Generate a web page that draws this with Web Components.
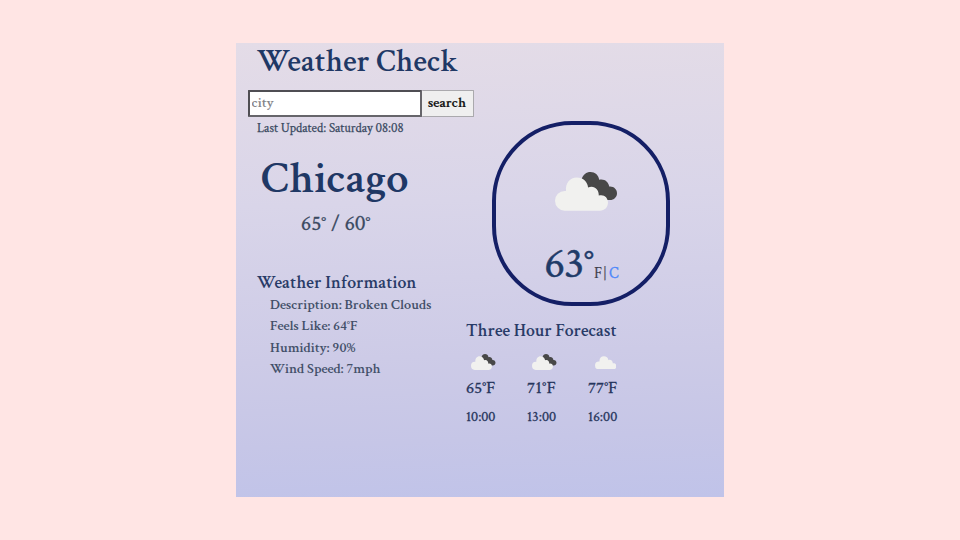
<!DOCTYPE html>
<html lang="en">
<head>
<meta charset="utf-8">
<title>Weather Check</title>
<style>
body{margin:0;width:960px;height:540px;overflow:hidden;background:#ffe5e4;font-family:"Crimson Text","Liberation Serif",serif}
</style>
</head>
<body>
<weather-app></weather-app>
<script>
// One line of text, spaced out to a given measure.
class TextLine extends HTMLElement{
  connectedCallback(){
    const size=this.getAttribute('size'),line=this.getAttribute('line'),stroke=this.getAttribute('stroke')||0,weight=this.getAttribute('weight')||600;
    const root=this.attachShadow({mode:'open'});
    root.innerHTML=`<style>:host{display:block;white-space:nowrap;font-size:${size}px;font-weight:${weight};line-height:${line}px;height:${line}px;-webkit-text-stroke:${stroke}px currentColor}span{display:inline-block}</style><span><slot></slot></span>`;
    const span=root.querySelector('span'),w=+this.getAttribute('measure');
    if(w){const n=this.textContent.length;span.style.letterSpacing=((w-span.getBoundingClientRect().width)/n)+'px';}
  }
}
customElements.define('text-line',TextLine);

class CloudIcon extends HTMLElement{
  connectedCallback(){
    const dark=this.hasAttribute('broken')?'<path fill="#484848" d="M26.5 7.5C28 2.500 31.300 0 35.500 0C40 0 43.500 3 44.200 7.800C49 6.500 53.500 9.500 54.200 14.500C58.500 14 62 17 62 21.200C62 25 59 28 55 28H38Z"/>':'';
    this.attachShadow({mode:'open'}).innerHTML=`<style>:host{display:block}svg{display:block;width:100%;height:100%}</style><svg viewBox="${dark?'0 0 62 39':'0 5 53 34'}" preserveAspectRatio="none">${dark}<path fill="#f1f1ef" d="M9.700 38.700A9.700 9.900 0 0 1 9.700 18.900L11 19C10.300 11 15 5.500 21.700 5.500C28 5.500 32.500 9.500 33.100 15.500C38.800 13 44 17 43.800 23.500C49 22 53 25.500 53 30.500C53 35.300 49.500 38.700 45 38.700Z"/></svg>`;
  }
}
customElements.define('cloud-icon',CloudIcon);

class CitySearch extends HTMLElement{
  connectedCallback(){
    this.attachShadow({mode:'open'}).innerHTML=`<style>
    :host{display:flex;height:27px}
    *{box-sizing:border-box;font-family:inherit}
    input{width:174px;height:27px;margin:0;padding:0 2px 3px;border:2px solid #4f4e53;border-right-color:#66656a;border-bottom-color:#66656a;border-radius:1px;background:#fff;font-size:14.500px;font-weight:600;outline:0}
    input::placeholder{color:#85858a;opacity:1}
    button{width:52px;height:27px;margin:0;padding:0 0 3px;border:1px solid #aaa9ad;border-left:0;border-radius:1px;background:#efefef;color:#111;font-size:14.400px;font-weight:600;-webkit-text-stroke:.2px #111}
    </style><input placeholder="city" aria-label="city"><button>search</button>`;
  }
}
customElements.define('city-search',CitySearch);

class ConditionBadge extends HTMLElement{
  connectedCallback(){
    this.attachShadow({mode:'open'}).innerHTML=`<style>
    :host{display:block;box-sizing:border-box;width:178px;height:185px;border:4px solid #141f66;border-radius:80px;padding:47px 0 0 48px}
    cloud-icon{width:62px;height:39px;margin-left:11px}
    .now{display:flex;align-items:flex-end;margin-top:27px;height:52px;color:#1f3b68}
    .f{color:#43424f}.bar{color:#55535f}.c{color:#4f88fa}.u{display:flex;padding-bottom:6px}
    </style><cloud-icon broken></cloud-icon><div class="now"><text-line size="43.100" line="52" measure="49.500" weight="400" stroke=".5">63°</text-line><div class="u"><text-line class="f" size="15" line="20" measure="9" weight="400" stroke=".2">F</text-line><text-line class="bar" size="15" line="20" measure="6" weight="400" stroke=".2">|</text-line><text-line class="c" size="15" line="20" weight="400" stroke=".3">C</text-line></div></div>`;
  }
}
customElements.define('condition-badge',ConditionBadge);

class ForecastHour extends HTMLElement{
  connectedCallback(){
    const broken=this.hasAttribute('broken');
    this.attachShadow({mode:'open'}).innerHTML=`<style>
    :host{display:block;width:61px;color:#26355c}
    .sky{height:18px;padding-left:${broken?5:6.5}px;padding-top:${broken?0:1.5}px;box-sizing:border-box}
    cloud-icon{width:${broken?24.500:21.500}px;height:${broken?16:13.500}px}
    .t{margin-top:5px}.h{margin-top:9px}
    </style><div class="sky"><cloud-icon ${broken?'broken':''}></cloud-icon></div>
    <text-line class="t" size="17.300" line="22" measure="29.300" weight="400" stroke=".3">${this.getAttribute('temp')}°F</text-line>
    <text-line class="h" size="14" line="18" measure="29.300" weight="400" stroke=".3">${this.getAttribute('hour')}</text-line>`;
  }
}
customElements.define('forecast-hour',ForecastHour);

class WeatherApp extends HTMLElement{
  connectedCallback(){
    this.attachShadow({mode:'open'}).innerHTML=`<style>
    :host{display:flex;justify-content:center;padding-top:43px}
    main{width:488px;height:454px;background:linear-gradient(178deg,#e4dce7 0%,#d9d5e9 35%,#cdcbe7 68%,#c6c6e7 86%,#c0c3e9 100%);color:#394961}
    .title{padding:1px 0 0 21px;color:#1f3865}
    city-search{margin:11px 0 0 11.500px}
    .body{display:grid;grid-template-columns:230px 1fr}
    .left{padding:2px 0 0 21px}
    .city{margin:15px 0 0 4px;color:#1f3865}
    .range{margin:7px 0 0 44px}
    .info{margin-top:35px;color:#293b67}
    .facts{margin:0 0 0 13px;color:#435069}
    condition-badge{margin:4px 0 0 26.400px}
    .head{margin-top:14px;color:#293b67}
    .hours{display:flex;margin-top:12px}
    </style>
    <main>
      <text-line class="title" size="31.300" line="35" measure="201.500">Weather Check</text-line>
      <city-search></city-search>
      <div class="body">
        <section class="left">
          <text-line size="12.900" line="20" measure="146.500" weight="400" stroke=".25">Last Updated: Saturday 08:08</text-line>
          <text-line class="city" size="44.700" line="50" measure="147.500">Chicago</text-line>
          <text-line class="range" size="21.400" line="26" measure="69.500" weight="400" stroke=".3">65° / 60°</text-line>
          <text-line class="info" size="17.900" line="22" measure="159.500">Weather Information</text-line>
          <div class="facts">
            <text-line size="14.300" line="21.300" measure="161.500">Description: Broken Clouds</text-line>
            <text-line size="14.300" line="21.300" measure="87.500">Feels Like: 64°F</text-line>
            <text-line size="14.300" line="21.300" measure="85.500">Humidity: 90%</text-line>
            <text-line size="14.300" line="21.300" measure="110.500">Wind Speed: 7mph</text-line>
          </div>
        </section>
        <section>
          <condition-badge></condition-badge>
          <text-line class="head" size="17.800" line="22" measure="150.500">Three Hour Forecast</text-line>
          <div class="hours"><forecast-hour broken temp="65" hour="10:00"></forecast-hour><forecast-hour broken temp="71" hour="13:00"></forecast-hour><forecast-hour temp="77" hour="16:00"></forecast-hour></div>
        </section>
      </div>
    </main>`;
  }
}
customElements.define('weather-app',WeatherApp);
</script>
</body>
</html>
